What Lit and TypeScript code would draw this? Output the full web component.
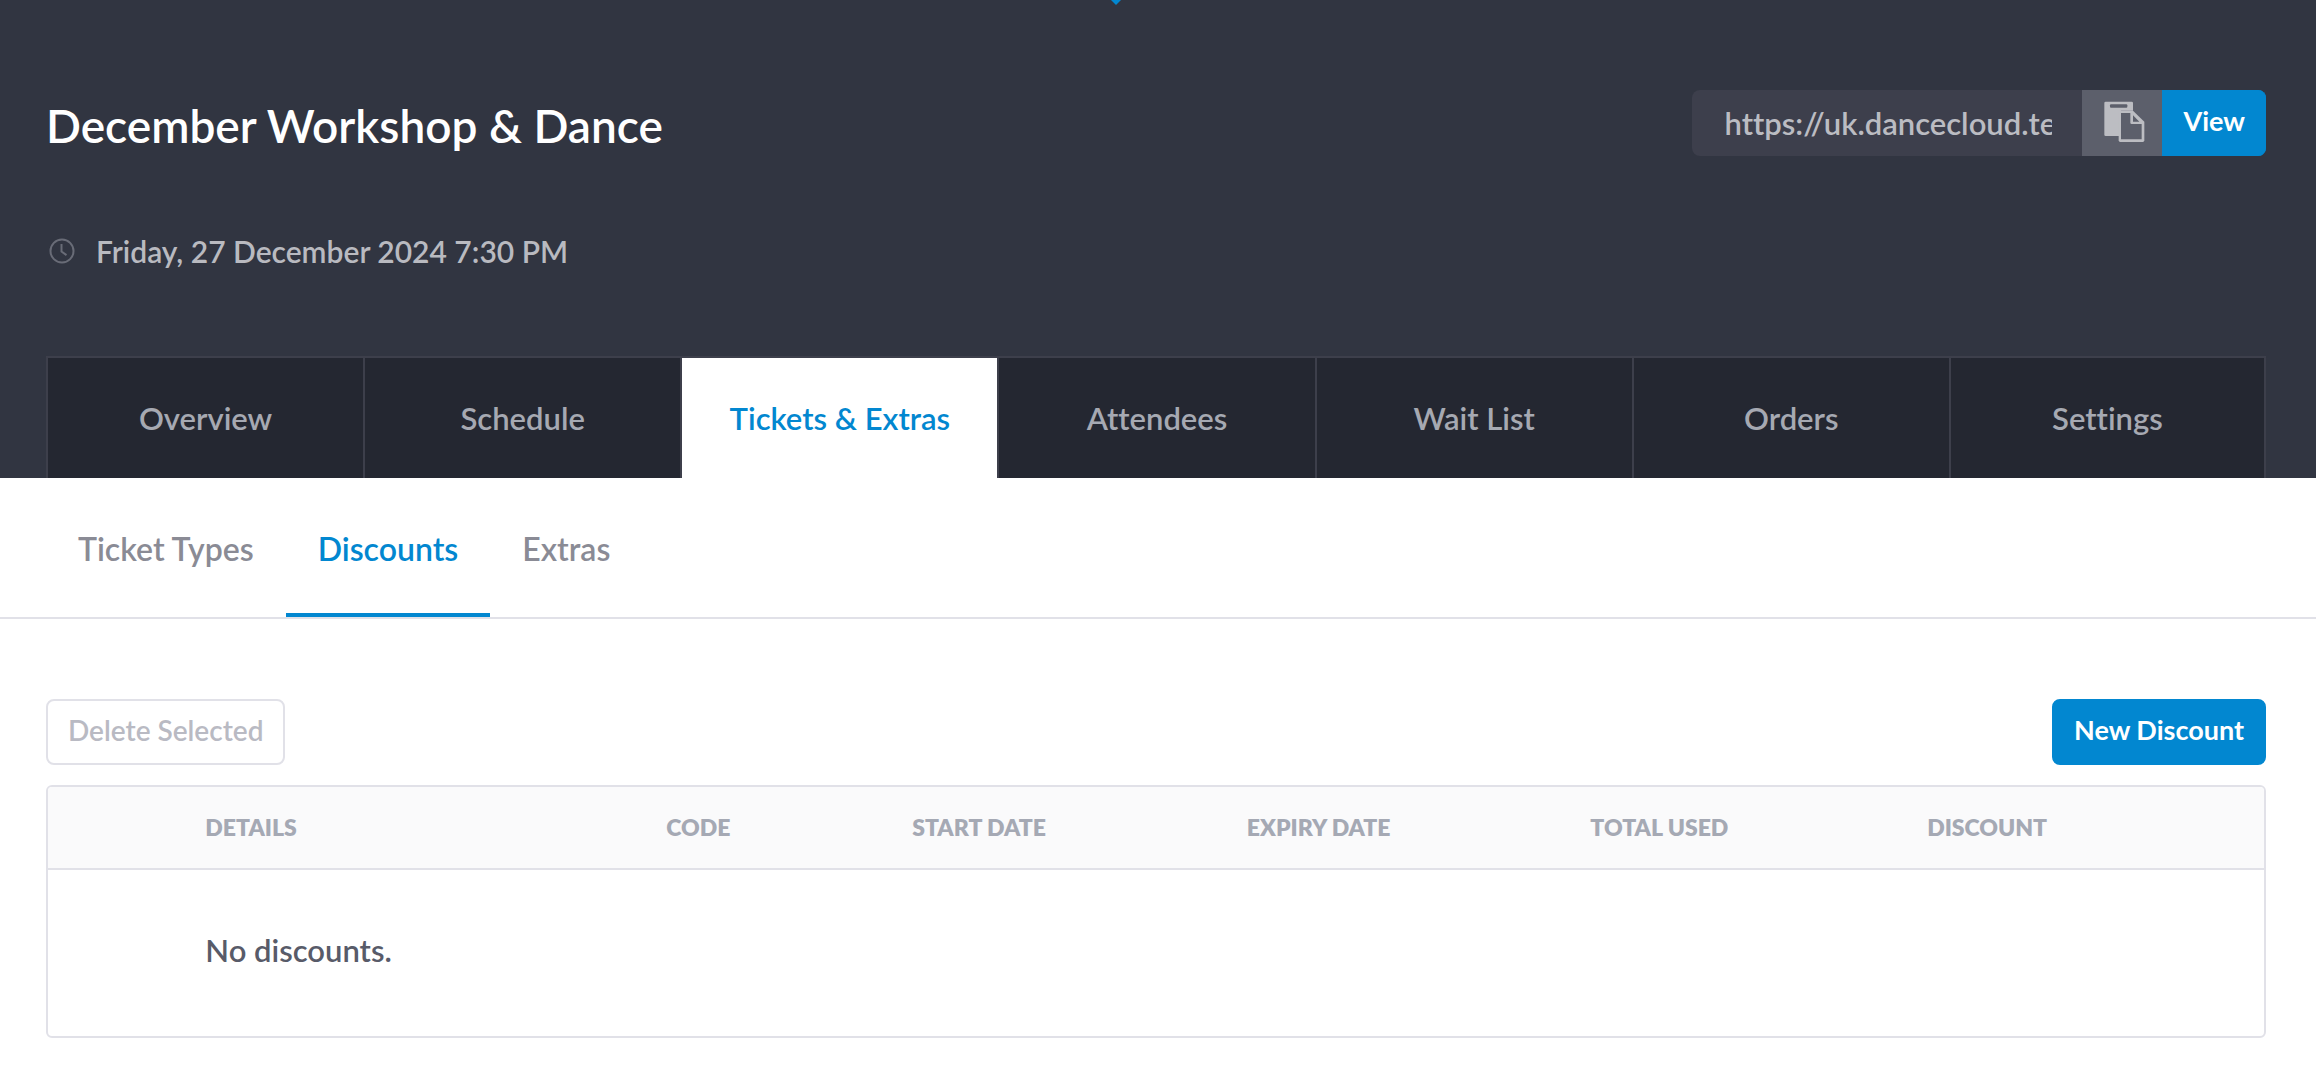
import { LitElement, html, css, svg } from "lit";
import { customElement, property } from "lit/decorators.js";
import { classMap } from "lit/directives/class-map.js";

const clockIcon = html`<svg class="clock" viewBox="0 0 32 32" aria-hidden="true">
  ${svg`<circle cx="16" cy="16" r="11.5"></circle><path d="M15.5 9v7.500l5 3.600"></path>`}
</svg>`;

const copyIcon = html`<svg class="copy-icon" viewBox="39 30 240 198" aria-hidden="true">
  ${svg`
    <path d="M110 65h78a4 4 0 0 1 4 4v23h-36v76h-46a4 4 0 0 1-4-4v-95a4 4 0 0 1 4-4z"></path>
    <rect class="cutout" x="123" y="73" width="52" height="10" rx="3"></rect>
    <path d="M149 92h43l34 33v56a5 5 0 0 1-5 5h-67a5 5 0 0 1-5-5z"></path>
    <path class="cutout" d="M156 99h28v29a4 4 0 0 0 4 4h30v46h-62z"></path>
    <path class="cutout" d="M192 106v19h19z"></path>
  `}
</svg>`;

/** Row of equal-width section tabs along the foot of the event header. */
@customElement("event-tabs")
export class EventTabs extends LitElement {
  @property({ type: Array }) items: string[] = [];
  @property() current = "";

  static styles = css`
    :host {
      display: block;
    }
    .tabs {
      display: grid;
      grid-auto-columns: 1fr;
      grid-auto-flow: column;
    }
    .tab {
      border-top: 2px solid #3d3f4b;
      border-left: 2px solid #3d3f4b;
      background: #242731;
      color: #a6a9b2;
      font-size: 31px;
      line-height: 120px;
      text-align: center;
      text-decoration: none;
      white-space: nowrap;
    }
    .tab:last-child {
      border-right: 2px solid #3d3f4b;
    }
    .tab.active {
      background: #fff;
      color: #0287d0;
    }
  `;

  render() {
    return html`<nav class="tabs">
      ${this.items.map(
        (item) => html`<a
          href="#"
          class=${classMap({ tab: true, active: item === this.current })}
          >${item}</a
        >`
      )}
    </nav>`;
  }
}

/** Secondary navigation with an underline below the open page. */
@customElement("sub-nav")
export class SubNav extends LitElement {
  @property({ type: Array }) items: string[] = [];
  @property() current = "";

  static styles = css`
    :host {
      display: block;
    }
    .nav {
      display: flex;
      padding: 0 46px;
      border-bottom: 2px solid #e1e1e8;
      background: #fff;
    }
    .link {
      padding: 51px 32px 44px;
      border-bottom: 4px solid transparent;
      color: #8a8b95;
      font-size: 32px;
      line-height: 40px;
      text-decoration: none;
    }
    .link.active {
      border-bottom-color: #0287d0;
      color: #0287d0;
    }
  `;

  render() {
    return html`<nav class="nav">
      ${this.items.map(
        (item) => html`<a
          href="#"
          class=${classMap({ link: true, active: item === this.current })}
          >${item}</a
        >`
      )}
    </nav>`;
  }
}

/** Discounts table with its empty state. */
@customElement("discount-table")
export class DiscountTable extends LitElement {
  @property({ type: Array }) columns: string[] = [];

  static styles = css`
    :host {
      display: block;
    }
    .table {
      width: 100%;
      table-layout: fixed;
      border: 2px solid #e1e1e8;
      border-radius: 6px;
      border-spacing: 0;
      overflow: hidden;
    }
    .select {
      width: 7.1%;
    }
    .details {
      width: 20.8%;
    }
    .code {
      width: 11.1%;
    }
    .start-date {
      width: 15.1%;
    }
    .expiry-date {
      width: 15.5%;
    }
    .total-used {
      width: 15.2%;
    }
    .head {
      padding: 26px 0 27px;
      border-bottom: 2px solid #e1e1e8;
      background: #fafafb;
      color: #a5a9b4;
      font-size: 23px;
      font-weight: 800;
      line-height: 28px;
      text-align: left;
      text-transform: uppercase;
    }
    .cell {
      padding: 60px 0 66px;
      color: #585b69;
      font-size: 31px;
      line-height: 40px;
    }
  `;

  render() {
    return html`<table class="table">
      <colgroup>
        <col class="select" />
        ${this.columns.map(
          (name) => html`<col class=${name.toLowerCase().replace(" ", "-")} />`
        )}
      </colgroup>
      <thead>
        <tr>
          <td class="head"></td>
          ${this.columns.map(
            (name) => html`<th class="head" scope="col">${name}</th>`
          )}
        </tr>
      </thead>
      <tbody>
        <tr>
          <td class="cell"></td>
          <td class="cell" colspan=${this.columns.length}>No discounts.</td>
        </tr>
      </tbody>
    </table>`;
  }
}

@customElement("app-root")
export class AppRoot extends LitElement {
  static styles = css`
    :host {
      display: block;
      position: relative;
      min-height: 100vh;
      background: #fff;
      font-family: Lato, "Liberation Sans", sans-serif;
      font-variant-ligatures: none;
      font-weight: 600;
    }
    .pointer {
      position: absolute;
      top: 0;
      left: 1111px;
      width: 10px;
      height: 5px;
      fill: #0287d0;
    }
    .header {
      padding: 90px 50px 0 46px;
      background: #313541;
    }
    .title-row {
      display: flex;
      align-items: flex-start;
      justify-content: space-between;
    }
    .title {
      margin: 0;
      color: #fff;
      font-size: 46px;
      font-weight: 600;
      line-height: 72px;
    }
    .share {
      display: flex;
      height: 66px;
      border-radius: 8px;
      overflow: hidden;
    }
    .url {
      box-sizing: border-box;
      width: 390px;
      padding: 0 30px 0 32px;
      border: 0;
      border-radius: 0;
      background: #3d3f4c;
      color: #bbbcc2;
      font: inherit;
      font-size: 31px;
      font-variant-ligatures: none;
      outline: none;
    }
    .copy {
      display: flex;
      padding: 0;
      border: 0;
      background: #5c5f6b;
    }
    .copy-icon {
      width: 80px;
      height: 66px;
      fill: #bcbdc2;
    }
    .cutout {
      fill: #5c5f6b;
    }
    .button {
      box-sizing: border-box;
      padding: 13px 20px 17px;
      border: 2px solid #0287d0;
      border-radius: 8px;
      background: #0287d0;
      color: #fff;
      font: inherit;
      font-size: 27px;
      font-weight: 700;
      line-height: 32px;
      text-decoration: none;
    }
    .button.view {
      padding-inline: 19px;
      border-radius: 0;
    }
    .button.plain {
      border-color: #e1e1e8;
      background: #fff;
      color: #b9bac3;
      font-size: 28px;
      font-weight: 600;
    }
    .when {
      display: flex;
      align-items: center;
      gap: 18px;
      margin: 69px 0 85px;
      color: #b9bac0;
      font-size: 30px;
      line-height: 40px;
    }
    .clock {
      width: 32px;
      height: 32px;
      fill: none;
      stroke: #696c77;
      stroke-width: 2;
    }
    .content {
      padding: 80px 50px 32px 46px;
    }
    .actions {
      display: flex;
      justify-content: space-between;
      margin-bottom: 20px;
    }
  `;

  render() {
    return html`
      <svg class="pointer" viewBox="0 0 10 5" aria-hidden="true">
        <path d="M0 0h10l-5 5z"></path>
      </svg>
      <header class="header">
        <div class="title-row">
          <h1 class="title">December Workshop & Dance</h1>
          <div class="share">
            <input
              class="url"
              type="text"
              aria-label="Event link"
              readonly
              .value=${"https://uk.dancecloud.test"}
            />
            <button class="copy" type="button" aria-label="Copy link">
              ${copyIcon}
            </button>
            <a class="button view" href="#">View</a>
          </div>
        </div>
        <div class="when">
          ${clockIcon}
          <time datetime="2024-12-27T19:30">Friday, 27 December 2024 7:30 PM</time>
        </div>
        <event-tabs
          current="Tickets & Extras"
          .items=${[
            "Overview",
            "Schedule",
            "Tickets & Extras",
            "Attendees",
            "Wait List",
            "Orders",
            "Settings",
          ]}
        ></event-tabs>
      </header>
      <sub-nav
        current="Discounts"
        .items=${["Ticket Types", "Discounts", "Extras"]}
      ></sub-nav>
      <main class="content">
        <div class="actions">
          <button class="button plain" type="button" disabled>Delete Selected</button>
          <button class="button primary" type="button">New Discount</button>
        </div>
        <discount-table
          .columns=${[
            "Details",
            "Code",
            "Start Date",
            "Expiry Date",
            "Total Used",
            "Discount",
          ]}
        ></discount-table>
      </main>
    `;
  }
}
